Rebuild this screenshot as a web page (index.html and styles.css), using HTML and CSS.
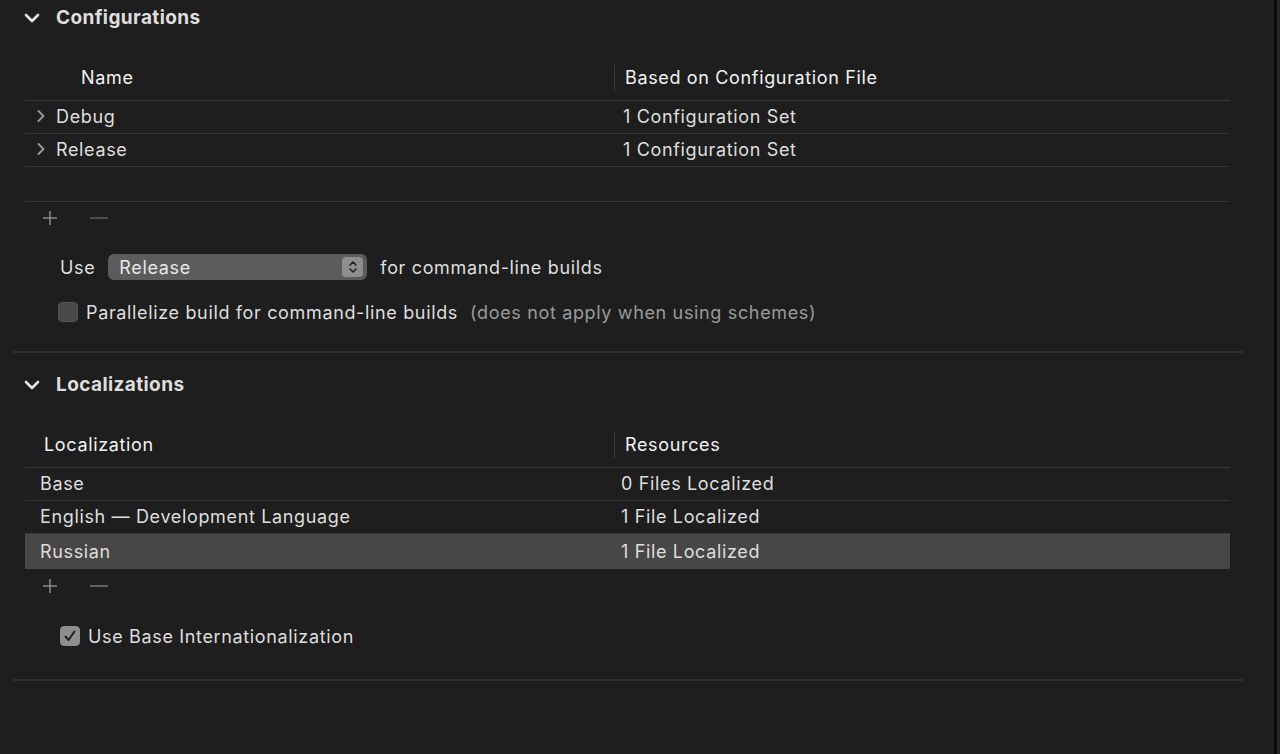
FILE: index.html
```html
<!DOCTYPE html>
<html>
<head>
<meta charset="utf-8">
<link rel="stylesheet" href="styles.css">
</head>
<body>
<div class="page">
  <div class="content">
    <section class="section">
      <div class="sec-head">
        <svg class="chev-down" width="16" height="10" viewBox="0 0 16 10"><path d="M2 2 L8 8 L14 2" fill="none" stroke="#e6e6e6" stroke-width="2.6" stroke-linecap="round" stroke-linejoin="round"/></svg>
        <span class="sec-title">Configurations</span>
      </div>
      <div class="table conf">
        <div class="thead">
          <div class="c1 name-head">Name</div>
          <div class="c2"><span class="sep"></span>Based on Configuration File</div>
        </div>
        <div class="row">
          <div class="c1 disclose"><svg class="chev-right" width="10" height="14" viewBox="0 0 10 14"><path d="M2.5 2 L7.5 7 L2.5 12" fill="none" stroke="#9a9a9a" stroke-width="1.8" stroke-linecap="round" stroke-linejoin="round"/></svg>Debug</div>
          <div class="c2 val">1 Configuration Set</div>
        </div>
        <div class="row">
          <div class="c1 disclose"><svg class="chev-right" width="10" height="14" viewBox="0 0 10 14"><path d="M2.5 2 L7.5 7 L2.5 12" fill="none" stroke="#9a9a9a" stroke-width="1.8" stroke-linecap="round" stroke-linejoin="round"/></svg>Release</div>
          <div class="c2 val">1 Configuration Set</div>
        </div>
        <div class="row empty"></div>
      </div>
      <div class="pm">
        <svg width="16" height="16" viewBox="0 0 16 16"><path d="M8 1 V15 M1 8 H15" stroke="#8a8a8a" stroke-width="1.5"/></svg>
        <svg class="minus" width="18" height="16" viewBox="0 0 18 16"><path d="M0 8 H18" stroke="#5e5e5e" stroke-width="1.5"/></svg>
      </div>
      <div class="use-row">
        <span class="label">Use</span>
        <div class="popup">
          <span>Release</span>
          <span class="stepper"><svg width="10" height="14" viewBox="0 0 10 14"><path d="M2 5 L5 2 L8 5 M2 9 L5 12 L8 9" fill="none" stroke="#222" stroke-width="1.6" stroke-linecap="round" stroke-linejoin="round"/></svg></span>
        </div>
        <span class="label">for command-line builds</span>
      </div>
      <div class="check-row par">
        <span class="checkbox"></span>
        <span class="label">Parallelize build for command-line builds</span>
        <span class="note">(does not apply when using schemes)</span>
      </div>
    </section>
    <div class="divider"></div>
    <section class="section second">
      <div class="sec-head">
        <svg class="chev-down" width="16" height="10" viewBox="0 0 16 10"><path d="M2 2 L8 8 L14 2" fill="none" stroke="#e6e6e6" stroke-width="2.6" stroke-linecap="round" stroke-linejoin="round"/></svg>
        <span class="sec-title">Localizations</span>
      </div>
      <div class="table loc">
        <div class="thead">
          <div class="c1 loc-head">Localization</div>
          <div class="c2"><span class="sep"></span>Resources</div>
        </div>
        <div class="row">
          <div class="c1 plain">Base</div>
          <div class="c2 val2">0 Files Localized</div>
        </div>
        <div class="row">
          <div class="c1 plain">English — Development Language</div>
          <div class="c2 val2">1 File Localized</div>
        </div>
        <div class="row selected">
          <div class="c1 plain">Russian</div>
          <div class="c2 val2">1 File Localized</div>
        </div>
      </div>
      <div class="pm pm2">
        <svg width="16" height="16" viewBox="0 0 16 16"><path d="M8 1 V15 M1 8 H15" stroke="#8a8a8a" stroke-width="1.5"/></svg>
        <svg class="minus" width="18" height="16" viewBox="0 0 18 16"><path d="M0 8 H18" stroke="#7a7a7a" stroke-width="1.5"/></svg>
      </div>
      <div class="check-row base">
        <span class="checkbox checked"><svg width="14" height="14" viewBox="0 0 14 14"><path d="M2.5 7.5 L5.5 11 L11.5 2.5" fill="none" stroke="#1e1e1e" stroke-width="2" stroke-linecap="round" stroke-linejoin="round"/></svg></span>
        <span class="label">Use Base Internationalization</span>
      </div>
    </section>
    <div class="divider"></div>
  </div>
  <div class="edge"></div>
</div>
</body>
</html>
```
FILE: styles.css
```css
html, body {
  margin: 0;
  padding: 0;
  background: #1e1e1e;
  height: 100%;
  overflow: hidden;
}
body {
  font-family: Inter, "Liberation Sans", sans-serif;
  font-size: 18px;
  letter-spacing: 0.65px;
  color: #dedede;
}
.page {
  display: flex;
  height: 754px;
}
.content {
  width: 1274px;
  padding-left: 12px;
  box-sizing: border-box;
}
.edge {
  width: 3px;
  background: #0c0c0c;
  border-right: 3px solid #262626;
}
.section {
  width: 1232px;
}
.second {
  margin-top: 14px;
}
.sec-head {
  height: 34px;
  display: flex;
  align-items: center;
}
.chev-down {
  margin-left: 12px;
  margin-top: 1px;
}
.sec-title {
  margin-left: 16px;
  font-weight: 700;
  font-size: 19px;
  letter-spacing: 0.4px;
  color: #dedede;
}
.table {
  margin-left: 13px;
  width: 1205px;
}
.conf { margin-top: 30px; }
.loc { margin-top: 31px; }
.thead {
  display: flex;
  box-sizing: border-box;
  padding-bottom: 9px;
  align-items: center;
  border-bottom: 1px solid #3a3a3a;
  color: #f2f2f2;
}
.conf .thead { height: 37px; }
.loc .thead { height: 36px; padding-bottom: 10px; }
.c1 {
  width: 589px;
  flex: none;
  display: flex;
  align-items: center;
  white-space: nowrap;
}
.c2 {
  flex: 1;
  display: flex;
  align-items: center;
  white-space: nowrap;
}
.sep {
  width: 1px;
  height: 26px;
  background: #3c3c3c;
  margin-right: 10px;
}
.name-head { padding-left: 56px; box-sizing: border-box; }
.loc-head { padding-left: 19px; box-sizing: border-box; }
.row {
  display: flex;
  height: 33px;
  box-sizing: border-box;
  padding-bottom: 2px;
  align-items: center;
  border-bottom: 1px solid #363636;
}
.row.empty { height: 35px; }
.row.selected {
  background: #474747;
  border-bottom: none;
  height: 35px;
  padding-bottom: 1px;
}
.disclose { padding-left: 11px; box-sizing: border-box; }
.chev-right { margin-right: 10px; }
.val { padding-left: 9px; }
.plain { padding-left: 15px; box-sizing: border-box; }
.val2 { padding-left: 7px; }
.pm {
  height: 32px;
  display: flex;
  align-items: center;
  padding-left: 30px;
  gap: 32px;
}
.pm2 { height: 34px; }
.use-row {
  display: flex;
  align-items: center;
  height: 30px;
  margin-top: 18px;
  padding-left: 48px;
}
.popup {
  margin-left: 13px;
  width: 259px;
  height: 26px;
  box-sizing: border-box;
  background: #5c5c5c;
  border-radius: 6px;
  display: flex;
  align-items: center;
  justify-content: space-between;
  padding: 0 4px 0 11px;
  color: #e8e8e8;
  margin-right: 13px;
}
.stepper {
  width: 21px;
  height: 20px;
  background: #8e8e8e;
  border-radius: 4px;
  display: flex;
  align-items: center;
  justify-content: center;
}
.check-row {
  display: flex;
  align-items: center;
  height: 30px;
}
.par {
  margin-top: 15px;
  padding-left: 46px;
  padding-bottom: 24px;
}
.checkbox {
  width: 20px;
  height: 20px;
  box-sizing: border-box;
  border-radius: 4px;
  background: #494949;
  border: 1px solid #545454;
  margin-right: 8px;
  display: flex;
  align-items: center;
  justify-content: center;
}
.checkbox.checked {
  background: #8e8e8e;
  border-color: #8e8e8e;
}
.note {
  color: #9a9a9a;
  margin-left: 12px;
}
.divider {
  height: 2px;
  background: #303030;
  width: 1232px;
}
.base {
  margin-top: 18px;
  padding-left: 48px;
  padding-bottom: 28px;
}
```
